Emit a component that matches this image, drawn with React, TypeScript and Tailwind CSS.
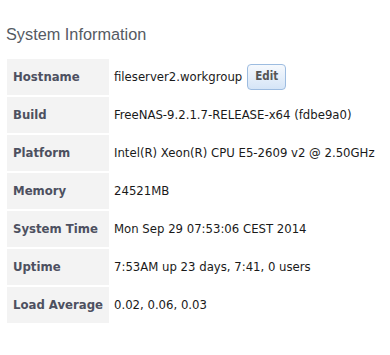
const rows: [string, string][] = [
  ['Hostname', 'fileserver2.workgroup'],
  ['Build', 'FreeNAS-9.2.1.7-RELEASE-x64 (fdbe9a0)'],
  ['Platform', 'Intel(R) Xeon(R) CPU E5-2609 v2 @ 2.50GHz'],
  ['Memory', '24521MB'],
  ['System Time', 'Mon Sep 29 07:53:06 CEST 2014'],
  ['Uptime', '7:53AM up 23 days, 7:41, 0 users'],
  ['Load Average', '0.02, 0.06, 0.03'],
];

export default function App() {
  return (
    <div className="w-[390px] h-[355px] bg-white pt-[24px] px-[5px]">
      <h2 className="pl-[1px] text-[16.3px] leading-[20px] text-[#555a63] font-['Liberation_Sans',Arial,sans-serif]">
        System Information
      </h2>
      <table className="mt-[13px] border-separate border-spacing-[2px] font-['DejaVu_Sans_Condensed','DejaVu_Sans',Verdana,sans-serif] text-[13px]">
        <tbody>
          {rows.map(([label, value]) => (
            <tr key={label} className="h-[36px]">
              <td className="w-[102px] bg-[#f3f3f3] pl-[6px] font-bold text-[#4d5060] whitespace-nowrap align-middle">
                {label}
              </td>
              <td className="pl-[3px] text-[#1a1a1a] whitespace-nowrap align-middle">
                {label === 'Hostname' ? (
                  <div className="flex items-center gap-[5px]">
                    <span>{value}</span>
                    <button
                      type="button"
                      className="w-[39px] h-[26px] rounded-[4px] border border-[#9dbce0] bg-gradient-to-b from-[#f6f9fd] to-[#d5e5f7] text-[11.5px] font-bold text-[#555]"
                    >
                      Edit
                    </button>
                  </div>
                ) : (
                  value
                )}
              </td>
            </tr>
          ))}
        </tbody>
      </table>
    </div>
  );
}
